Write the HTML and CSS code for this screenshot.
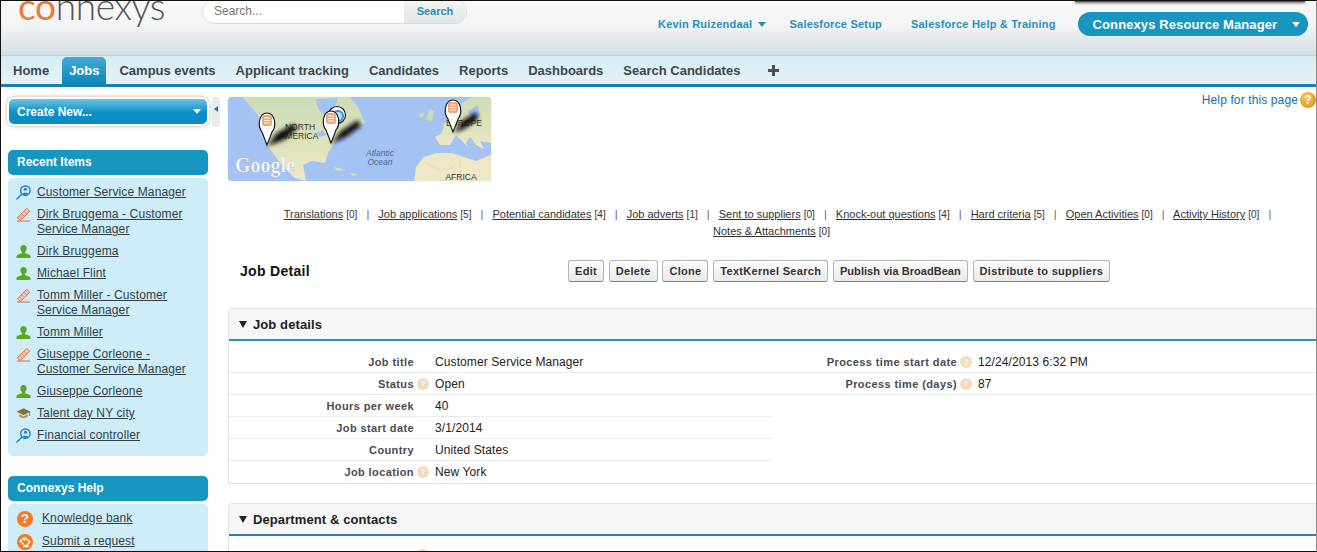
FILE: index.html
```html
<!DOCTYPE html>
<html lang="en">
<head>
    <meta charset="UTF-8">
    <title>Job Detail - Connexys</title>
    <link rel="stylesheet" href="styles.css">
</head>
<body>

    <!-- Shared icons -->
    <svg class="icon-defs" width="0" height="0">
        <symbol id="i-search" viewBox="0 0 16 16">
            <circle cx="10" cy="6" r="5" fill="#d6effa" stroke="#1a7fd0" stroke-width="1.5"/>
            <circle cx="10" cy="4.6" r="1.6" fill="#1a7fd0"/>
            <path d="M7 9.6c.4-1.8 5.6-1.8 6 0-1.4 1.3-4.6 1.3-6 0z" fill="#1a7fd0"/>
            <path d="M6.2 9.8 1 15" stroke="#1a7fd0" stroke-width="1.6" stroke-linecap="round"/>
        </symbol>
        <symbol id="i-pencil" viewBox="0 0 16 16">
            <path d="M1.5 11.5 11.5 1.5 14.5 4.5 4.5 14.5z" fill="#f3cdb8" stroke="#e0632c" stroke-width="1"/>
            <path d="M3.5 9.5l3 3M6 7l3 3M8.5 4.5l3 3" stroke="#e0632c" stroke-width=".8"/>
            <path d="M1 15h14" stroke="#e0632c" stroke-width="1"/>
        </symbol>
        <symbol id="i-person" viewBox="0 0 16 16">
            <path d="M8 1c2.200 0 3.400 1.500 3.400 3.600 0 1.800-.8 3.200-1.800 4v1.300c1.900.7 4.700 1.100 5.900 2.700V15H.5v-2.400c1.200-1.600 4-2 5.900-2.700V8.600c-1-.8-1.800-2.200-1.800-4C4.600 2.500 5.800 1 8 1z" fill="#5aa81e"/>
        </symbol>
        <symbol id="i-cap" viewBox="0 0 16 16">
            <path d="M8 2.500 15.500 6 8 9.500.5 6z" fill="#8a6a2c"/>
            <path d="M3.500 8.500v3c2.500 2 6.500 2 9 0v-3L8 10.800z" fill="#b5985a"/>
            <path d="M14.500 6.500v4" stroke="#8a6a2c"/>
        </symbol>
        <symbol id="i-tag" viewBox="0 0 16 16">
            <circle cx="8" cy="8" r="8" fill="#f47b20"/>
            <path d="M3 7 7.500 3.500l5.500 4.200L9 12.500z" fill="none" stroke="#fff" stroke-width="1.3"/>
            <circle cx="7.300" cy="6" r="1" fill="#fff"/>
            <path d="M6 12.500h6" stroke="#fff" stroke-width="1.3"/>
        </symbol>
    </svg>

    <div class="page">

        <!-- Top header -->
        <div class="header">
            <div class="top-shadow"></div>
            <div class="logo"><span class="logo-co">co</span>nnexys</div>
            <div class="search-box">
                <span class="search-input">Search...</span>
                <span class="search-btn">Search</span>
            </div>
            <div class="header-links">
                <a class="header-link user-link">Kevin Ruizendaal <span class="caret"></span></a>
                <a class="header-link setup-link">Salesforce Setup</a>
                <a class="header-link">Salesforce Help &amp; Training</a>
                <div class="app-menu">Connexys Resource Manager <span class="caret caret-white"></span></div>
            </div>
        </div>

        <!-- Tabs -->
        <div class="tabs">
            <a class="tab">Home</a>
            <a class="tab active-tab">Jobs</a>
            <a class="tab">Campus events</a>
            <a class="tab">Applicant tracking</a>
            <a class="tab">Candidates</a>
            <a class="tab">Reports</a>
            <a class="tab">Dashboards</a>
            <a class="tab">Search Candidates</a>
            <a class="tab tab-plus">
                <svg width="11" height="11" viewBox="0 0 11 11"><path d="M4 0h3v4h4v3H7v4H4V7H0V4h4z" fill="#4a5258"/></svg>
            </a>
        </div>

        <div class="content">

            <!-- Sidebar -->
            <div class="sidebar">
                <div class="create-row">
                    <div class="create-new">Create New... <span class="caret caret-white"></span></div>
                    <div class="collapse-handle"><span class="handle-arrow"></span></div>
                </div>

                <div class="side-title">Recent Items</div>
                <ul class="side-list">
                    <li><svg class="side-icon"><use href="#i-search"/></svg><a>Customer Service Manager</a></li>
                    <li><svg class="side-icon"><use href="#i-pencil"/></svg><a>Dirk Bruggema - Customer Service Manager</a></li>
                    <li><svg class="side-icon"><use href="#i-person"/></svg><a>Dirk Bruggema</a></li>
                    <li><svg class="side-icon"><use href="#i-person"/></svg><a>Michael Flint</a></li>
                    <li><svg class="side-icon"><use href="#i-pencil"/></svg><a>Tomm Miller - Customer Service Manager</a></li>
                    <li><svg class="side-icon"><use href="#i-person"/></svg><a>Tomm Miller</a></li>
                    <li><svg class="side-icon"><use href="#i-pencil"/></svg><a>Giuseppe Corleone - Customer Service Manager</a></li>
                    <li><svg class="side-icon"><use href="#i-person"/></svg><a>Giuseppe Corleone</a></li>
                    <li><svg class="side-icon"><use href="#i-cap"/></svg><a>Talent day NY city</a></li>
                    <li><svg class="side-icon"><use href="#i-search"/></svg><a>Financial controller</a></li>
                </ul>

                <div class="side-title help-title">Connexys Help</div>
                <ul class="side-list help-list">
                    <li><span class="round-help">?</span><a>Knowledge bank</a></li>
                    <li><svg class="side-icon help-icon"><use href="#i-tag"/></svg><a>Submit a request</a></li>
                </ul>
            </div>

            <!-- Main column -->
            <div class="main">
                <div class="main-top">
                    <svg class="map" viewBox="0 0 263 84">
                        <defs>
                            <filter id="blur" x="-30%" y="-30%" width="160%" height="160%"><feGaussianBlur stdDeviation="2"/></filter>
                            <linearGradient id="land" x1="0" y1="0" x2="0" y2="1">
                                <stop offset="0" stop-color="#cbdcb6"/>
                                <stop offset=".6" stop-color="#dfe3bb"/>
                                <stop offset="1" stop-color="#efe8c8"/>
                            </linearGradient>
                        </defs>
                        <rect width="263" height="84" fill="#a5c3f2"/>
                        <!-- North America -->
                        <path d="M15 1 30 18 39 48 52 66 67 81 78 84 75 68 84 64 97 66 100 56 107 46 112 38 122 32 137 26 130 10 122 0H15z" fill="url(#land)"/>
                        <path d="M88 2 110 1 106 13 96 18 90 12z" fill="#a5c3f2"/>
                        <path d="M88 36l7-3 3 5-6 2zM99 38l5-1-1 4z" fill="#a5c3f2"/>
                        <path d="M106 70l12 3-9 1zM122 76l8 1-5 2z" fill="#dcdfb4"/>
                        <!-- Europe -->
                        <path d="M207 40 214 36 216 26 226 22 232 18 234 6 244 0H263V46L252 44 256 52 248 48 242 40 238 46 240 50 234 44 228 38 222 48 212 48z" fill="url(#land)"/>
                        <path d="M240 14 250 8 252 18 244 24z" fill="#a5c3f2"/>
                        <path d="M198 22 202 12 206 14 204 24z" fill="#c9dbb0"/>
                        <path d="M191 17l4-2 1 4-4 2z" fill="#c9dbb0"/>
                        <!-- Africa -->
                        <path d="M186 84 188 70 196 60 208 56 224 56 236 60 248 64 263 58V84z" fill="#efe8c6"/>
                        <path d="M198 66 214 74 226 70M232 62V84" fill="none" stroke="#d8cfa8" stroke-width=".5"/>
                        <!-- Labels -->
                        <text class="map-label" x="72" y="33" text-anchor="middle">NORTH</text>
                        <text class="map-label" x="71" y="42" text-anchor="middle">AMERICA</text>
                        <text class="map-label map-ocean" x="152" y="59" text-anchor="middle">Atlantic</text>
                        <text class="map-label map-ocean" x="152" y="68" text-anchor="middle">Ocean</text>
                        <text class="map-label" x="236" y="29" text-anchor="middle">EUROPE</text>
                        <text class="map-label" x="233" y="83" text-anchor="middle">AFRICA</text>
                        <text class="map-google" x="7" y="75">Google</text>
                        <!-- Pin shadows -->
                        <g filter="url(#blur)" fill="#111">
                            <path d="M39 49 49 36 66 27 69 32 56 43z"/>
                            <path d="M103 47 113 34 130 23 133 29 118 40z"/>
                            <path d="M226 36 234 24 248 15 250 22 238 31z"/>
                        </g>
                        <!-- Pins -->
                        <g stroke="#111" stroke-width="1.1">
                            <circle cx="109" cy="18" r="8.500" fill="#fff"/>
                            <circle cx="110" cy="19" r="5" fill="#bfe0f5" stroke="#2f8fdc" stroke-width="2"/>
                            <path d="M39 48 34 35C29 29 31 16 39 16 47 16 49 29 44 35z" fill="#fff"/>
                            <path d="M103 46 98 33C93 27 95 14 103 14 111 14 113 27 108 33z" fill="#fff"/>
                            <path d="M225 35 220 22C215 16 217 3 225 3 233 3 235 16 230 22z" fill="#fff"/>
                        </g>
                        <g fill="#f4a878">
                            <rect x="34" y="18" width="10" height="11" rx="2"/>
                            <rect x="98" y="16" width="10" height="11" rx="2"/>
                            <rect x="220" y="5" width="10" height="11" rx="2"/>
                        </g>
                        <path d="M36 21h6M36 23.500h6M36 26h6M100 19h6M100 21.500h6M100 24h6M222 8h6M222 10.500h6M222 13h6" stroke="#fff" stroke-width=".9"/>
                    </svg>
                    <div class="page-help">Help for this page <span class="page-help-icon">?</span></div>
                </div>

                <div class="related">
                    <span class="rel-item"><a>Translations</a> <span class="rel-count">[0]</span></span>
                    <span class="rel-sep">|</span>
                    <span class="rel-item"><a>Job applications</a> <span class="rel-count">[5]</span></span>
                    <span class="rel-sep">|</span>
                    <span class="rel-item"><a>Potential candidates</a> <span class="rel-count">[4]</span></span>
                    <span class="rel-sep">|</span>
                    <span class="rel-item"><a>Job adverts</a> <span class="rel-count">[1]</span></span>
                    <span class="rel-sep">|</span>
                    <span class="rel-item"><a>Sent to suppliers</a> <span class="rel-count">[0]</span></span>
                    <span class="rel-sep">|</span>
                    <span class="rel-item"><a>Knock-out questions</a> <span class="rel-count">[4]</span></span>
                    <span class="rel-sep">|</span>
                    <span class="rel-item"><a>Hard criteria</a> <span class="rel-count">[5]</span></span>
                    <span class="rel-sep">|</span>
                    <span class="rel-item"><a>Open Activities</a> <span class="rel-count">[0]</span></span>
                    <span class="rel-sep">|</span>
                    <span class="rel-item"><a>Activity History</a> <span class="rel-count">[0]</span></span>
                    <span class="rel-sep rel-sep-end">|</span>
                    <span class="rel-item"><a>Notes &amp; Attachments</a> <span class="rel-count">[0]</span></span>
                </div>

                <div class="detail-head">
                    <h2 class="detail-title">Job Detail</h2>
                    <div class="btn-row">
                        <button class="btn">Edit</button>
                        <button class="btn">Delete</button>
                        <button class="btn">Clone</button>
                        <button class="btn">TextKernel Search</button>
                        <button class="btn btn-tight">Publish via BroadBean</button>
                        <button class="btn">Distribute to suppliers</button>
                    </div>
                </div>

                <!-- Job details section -->
                <div class="section">
                    <div class="section-head"><span class="tri"></span>Job details</div>
                    <div class="section-body">
                        <div class="col">
                            <div class="row"><span class="lbl">Job title</span><span class="tip-slot"></span><span class="val">Customer Service Manager</span></div>
                            <div class="row"><span class="lbl">Status</span><span class="tip-slot"><span class="tip">?</span></span><span class="val">Open</span></div>
                            <div class="row"><span class="lbl">Hours per week</span><span class="tip-slot"></span><span class="val">40</span></div>
                            <div class="row"><span class="lbl">Job start date</span><span class="tip-slot"></span><span class="val">3/1/2014</span></div>
                            <div class="row"><span class="lbl">Country</span><span class="tip-slot"></span><span class="val">United States</span></div>
                            <div class="row row-last"><span class="lbl">Job location</span><span class="tip-slot"><span class="tip">?</span></span><span class="val">New York</span></div>
                        </div>
                        <div class="col col-right">
                            <div class="row"><span class="lbl">Process time start date</span><span class="tip-slot"><span class="tip">?</span></span><span class="val">12/24/2013 6:32 PM</span></div>
                            <div class="row"><span class="lbl">Process time (days)</span><span class="tip-slot"><span class="tip">?</span></span><span class="val">87</span></div>
                        </div>
                    </div>
                </div>

                <!-- Department section, runs off the bottom of the window -->
                <div class="section">
                    <div class="section-head section-head-dark"><span class="tri"></span>Department &amp; contacts</div>
                    <div class="section-body section-body-cut">
                        <div class="col">
                            <div class="row"><span class="lbl"></span><span class="tip-slot"><span class="tip"></span></span><span class="val"></span></div>
                        </div>
                    </div>
                </div>
            </div>
        </div>
    </div>

</body>
</html>
```

FILE: styles.css
```css
/* General page styling */
html, body {
    margin: 0;
    padding: 0;
    height: 552px;
    overflow: hidden;
    background-color: white;
    font-family: 'Liberation Sans', Arial, sans-serif;
    color: #333;
}

a {
    color: inherit;
}

.icon-defs {
    display: block;
    height: 0;
}

.page {
    box-sizing: border-box;
    height: 552px;
    overflow: hidden;
    border: 1px solid #111;
    border-right-color: #888;
}

/* Header */
.header {
    position: relative;
    display: flex;
    height: 54px;
    overflow: hidden;
    background: linear-gradient(#f8f8f8 0%, #f3f4f5 45%, #d3dde1 100%);
}

.top-shadow {
    position: absolute;
    top: -6px;
    left: 1074px;
    width: 230px;
    height: 7px;
    background-color: #555;
    box-shadow: 0 1px 3px rgba(0, 0, 0, 0.6);
}

.logo {
    width: 200px;
    margin: -17px 0 0 17px;
    font-family: 'Lato', sans-serif;
    font-size: 37px;
    font-weight: 300;
    line-height: 44px;
    color: #555;
    flex-shrink: 0;
    letter-spacing: -0.3px;
}

.logo-co {
    color: #e8793a;
    font-weight: 400;
}

.search-box {
    display: flex;
    height: 23px;
    width: 263px;
    margin: -2px 0 0 -16px;
    border: 1px solid #d9dcdd;
    border-radius: 12px;
    overflow: hidden;
    background-color: white;
    font-size: 12px;
    line-height: 22px;
    flex-shrink: 0;
}

.search-input {
    flex: 1;
    padding-left: 11px;
    color: #777;
}

.search-btn {
    width: 62px;
    text-align: center;
    font-size: 11px;
    font-weight: bold;
    color: #2a8fb5;
    background: linear-gradient(#f4f4f4, #e3e5e6);
}

.header-links {
    display: flex;
    align-items: center;
    margin-left: 191px;
    height: 46px;
    font-size: 11px;
    font-weight: bold;
    letter-spacing: 0.2px;
    color: #2a8fb5;
}

.header-link {
    margin-right: 27px;
    white-space: nowrap;
}

.user-link {
    margin-right: 24px;
}

.setup-link {
    margin-right: 29px;
}

.caret {
    display: inline-block;
    width: 0;
    height: 0;
    margin-left: 2px;
    border-left: 4px solid transparent;
    border-right: 4px solid transparent;
    border-top: 5px solid #2a8fb5;
    vertical-align: 1px;
}

.caret-white {
    border-top-color: white;
}

.app-menu {
    display: flex;
    align-items: center;
    justify-content: space-between;
    box-sizing: border-box;
    width: 230px;
    height: 24px;
    margin: 0 0 0 -5px;
    padding: 0 8px 0 15px;
    border-radius: 12px;
    background-color: #1796c0;
    color: white;
    font-size: 13px;
    letter-spacing: 0.1px;
    white-space: nowrap;
}

/* Tabs */
.tabs {
    display: flex;
    height: 28px;
    padding-left: 2px;
    background: linear-gradient(#d5ecf5, #e6f3f7);
    border-top: 1px solid #c3cfd4;
    border-bottom: 3px solid #1580b6;
}

.tab {
    margin: 1px 3px 0 3px;
    padding: 0 7px;
    font-size: 13px;
    font-weight: bold;
    line-height: 27px;
    color: #3f464c;
    white-space: nowrap;
}

.active-tab {
    border-radius: 5px 5px 0 0;
    background: linear-gradient(#45a9d4, #0a86be);
    color: white;
}

.tab-plus {
    display: flex;
    align-items: center;
    padding-left: 15px;
}

/* Two columns under the tabs */
.content {
    display: flex;
}

/* Sidebar */
.sidebar {
    box-sizing: border-box;
    width: 227px;
    padding: 10px 0 0 7px;
    flex-shrink: 0;
}

.create-row {
    display: flex;
    align-items: flex-start;
    height: 30px;
    margin-bottom: 23px;
}

.create-new {
    display: flex;
    align-items: center;
    justify-content: space-between;
    box-sizing: border-box;
    width: 198px;
    height: 25px;
    margin: 2px 0 0 1px;
    padding: 0 6px 0 8px;
    border-radius: 5px;
    background: linear-gradient(#6cc4e4, #0a8fc6 55%, #0a8bc2);
    box-shadow: 0 0 0 2px white, 0 0 4px 2px rgba(0, 0, 0, 0.3);
    color: white;
    font-size: 12px;
    font-weight: bold;
}

.collapse-handle {
    display: flex;
    align-items: center;
    justify-content: center;
    width: 8px;
    height: 30px;
    margin-left: 5px;
    border-radius: 3px;
    background-color: #e9eaeb;
}

.handle-arrow {
    width: 0;
    height: 0;
    margin-bottom: 6px;
    border-top: 3px solid transparent;
    border-bottom: 3px solid transparent;
    border-right: 4px solid #2b6ca3;
}

.side-title {
    box-sizing: border-box;
    width: 200px;
    height: 25px;
    padding-left: 9px;
    border-radius: 5px;
    background-color: #1796c0;
    color: white;
    font-size: 12px;
    font-weight: bold;
    line-height: 25px;
}

.help-title {
    margin-top: 20px;
}

.side-list {
    display: flex;
    flex-direction: column;
    gap: 7px;
    box-sizing: border-box;
    width: 200px;
    margin: 3px 0 0 0;
    padding: 7px 10px 13px 8px;
    list-style: none;
    border-radius: 5px;
    background-color: #cfedf8;
    font-size: 12px;
    line-height: 15px;
    letter-spacing: 0.12px;
}

.side-list li {
    display: flex;
    gap: 6px;
}

.side-list a {
    text-decoration: underline;
    color: #333d44;
}

.side-icon {
    width: 15px;
    height: 15px;
    flex-shrink: 0;
}

.help-list {
    padding-left: 9px;
}

.help-list li {
    gap: 9px;
}

.help-icon {
    width: 16px;
    height: 16px;
}

.round-help {
    display: block;
    width: 16px;
    height: 16px;
    border-radius: 50%;
    background-color: #f47b20;
    color: white;
    font-size: 13px;
    font-weight: bold;
    line-height: 16px;
    text-align: center;
    flex-shrink: 0;
}

/* Main column */
.main {
    flex: 1;
    min-width: 0;
    margin-left: 0;
}

.main-top {
    display: flex;
    justify-content: space-between;
    height: 94px;
    padding-top: 5px;
}

.map {
    width: 263px;
    height: 84px;
    margin-top: 5px;
    border-radius: 4px;
    box-shadow: 0 0 1px rgba(0, 0, 0, 0.35);
}

.map-label {
    font-size: 8.5px;
    fill: #333;
}

.map-ocean {
    font-style: italic;
    fill: #4a6a90;
}

.map-google {
    font-family: 'Liberation Serif', serif;
    font-size: 20px;
    font-weight: bold;
    fill: #f4f6f8;
    stroke: #99a;
    stroke-width: 0.2px;
}

.page-help {
    display: flex;
    align-items: center;
    gap: 2px;
    height: 16px;
    font-size: 12px;
    letter-spacing: 0.12px;
    color: #1a6ea5;
}

.page-help-icon {
    display: block;
    width: 16px;
    height: 16px;
    border-radius: 50%;
    background: radial-gradient(circle at 40% 30%, #f9c55c, #e08a0c);
    color: white;
    font-size: 12px;
    font-weight: bold;
    line-height: 16px;
    text-align: center;
}

/* Related list links */
.related {
    margin-top: 20px;
    text-align: center;
    font-size: 11px;
    line-height: 16px;
    color: #333;
    padding-right: 1px;
}

.related a {
    text-decoration: underline;
}

.rel-item {
    white-space: nowrap;
}

.rel-count {
    font-size: 10px;
}

.rel-sep {
    margin: 0 6px;
    color: #666;
}

.rel-sep-end {
    margin-right: -12px;
}

/* Job detail title and buttons */
.detail-head {
    display: flex;
    align-items: center;
    margin-top: 20px;
    height: 22px;
}

.detail-title {
    box-sizing: border-box;
    width: 340px;
    margin: 0;
    padding-left: 12px;
    font-size: 14px;
    font-weight: bold;
    letter-spacing: 0.3px;
    color: #111;
}

.btn-row {
    display: flex;
    gap: 4.8px;
}

.btn {
    box-sizing: border-box;
    height: 22px;
    padding: 0 6px;
    border: 1px solid #b5b5b5;
    border-bottom-color: #7f7f7f;
    border-radius: 3px;
    background: linear-gradient(#fdfdfd, #e9e9e9);
    font-family: inherit;
    font-size: 11px;
    font-weight: bold;
    letter-spacing: 0.3px;
    color: #333;
}

.btn-tight {
    letter-spacing: 0.05px;
}

/* Collapsible sections */
.section {
    margin-top: 19px;
    border: 1px solid #e0e3e5;
    border-right: none;
    border-radius: 4px 0 0 0;
}

.detail-head + .section {
    margin-top: 26px;
}

.section-head {
    display: flex;
    align-items: center;
    box-sizing: border-box;
    height: 32px;
    padding-left: 10px;
    background-color: #f6f6f6;
    border-bottom: 2px solid #2a93b8;
    font-size: 13px;
    font-weight: bold;
    letter-spacing: 0.1px;
    color: #222;
}

.section-head-dark {
    border-bottom-color: #2a7fb0;
}

.tri {
    width: 0;
    height: 0;
    margin-right: 6px;
    border-left: 4.5px solid transparent;
    border-right: 4.5px solid transparent;
    border-top: 7px solid #222;
}

.section-body {
    display: flex;
    padding-top: 10px;
}

.section-body-cut {
    padding-top: 8px;
}

.col {
    width: 543px;
    flex-shrink: 0;
}

.col-right {
    flex: 1;
    width: auto;
}

.row {
    display: grid;
    grid-template-columns: 185px 21px 1fr;
    align-items: center;
    box-sizing: border-box;
    height: 22px;
    border-bottom: 1px solid #e9ebec;
}

.row-last {
    border-bottom: none;
}

.lbl {
    text-align: right;
    font-size: 11px;
    font-weight: bold;
    letter-spacing: 0.4px;
    color: #4a4a56;
}

.val {
    font-size: 12px;
    letter-spacing: 0.1px;
    color: #222;
}

.tip-slot {
    padding-left: 3px;
}

.tip {
    display: block;
    width: 12px;
    height: 12px;
    border-radius: 50%;
    background-color: #f1dcc0;
    color: #faf3e6;
    font-size: 9px;
    font-weight: bold;
    line-height: 12px;
    text-align: center;
}
```
